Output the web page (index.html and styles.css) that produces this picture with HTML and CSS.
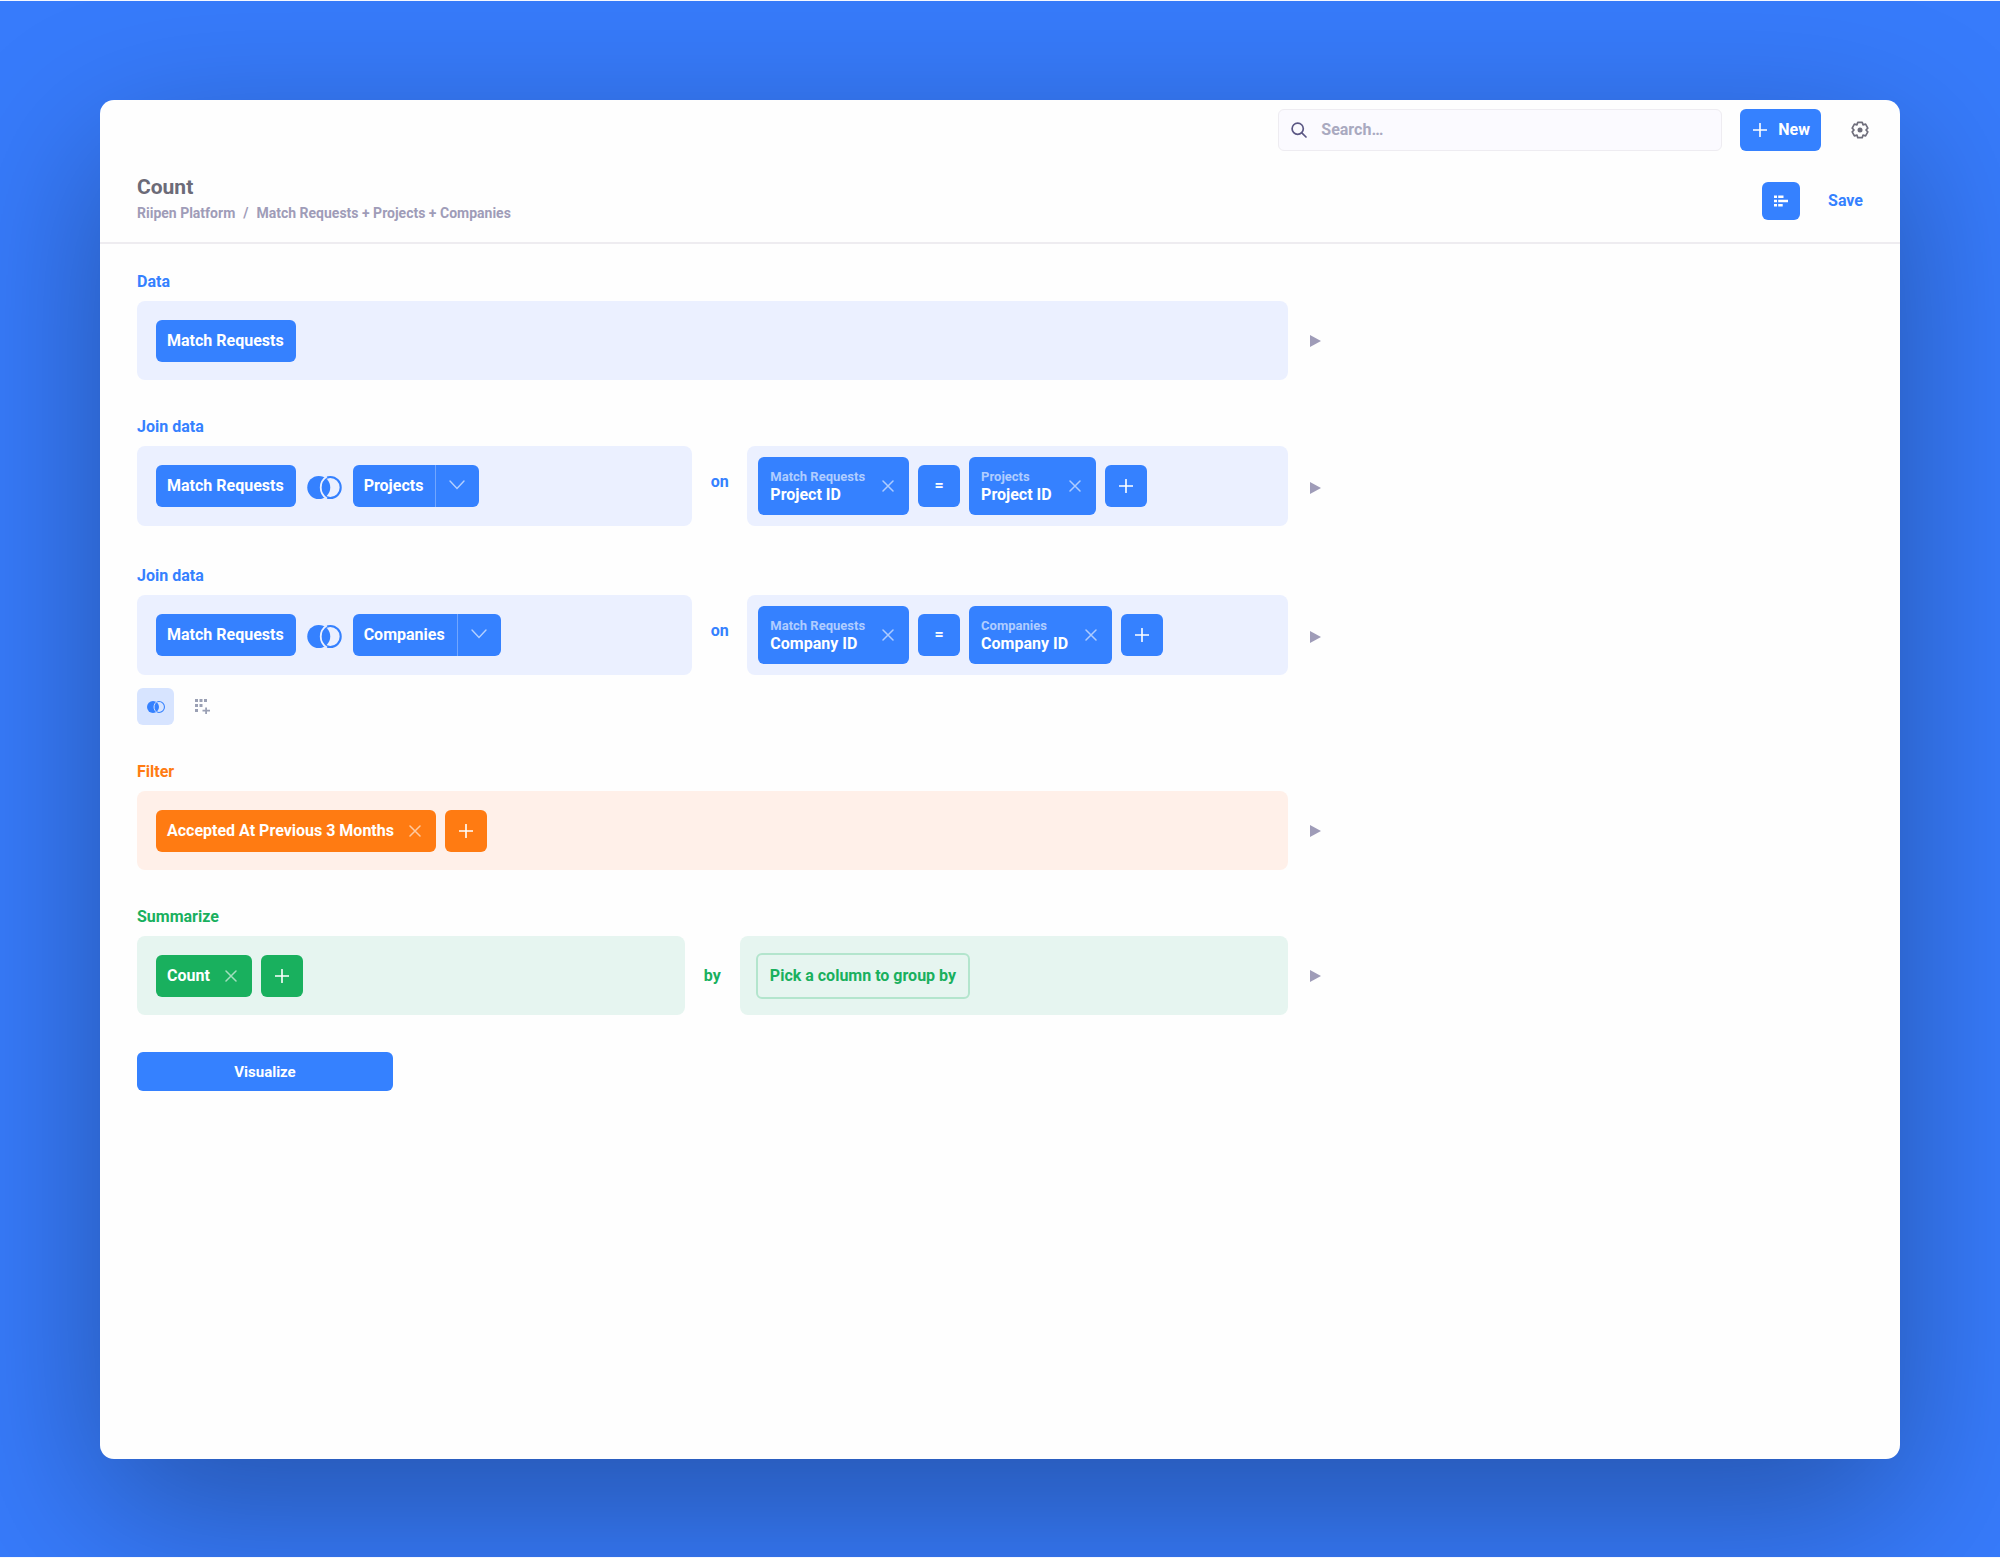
FILE: index.html
```html
<!DOCTYPE html>
<html lang="en">
<head>
    <meta charset="UTF-8">
    <meta name="viewport" content="width=device-width, initial-scale=1.0">
    <title>Count</title>
    <link rel="stylesheet" href="styles.css">
</head>
<body>

<!-- Shared icons -->
<svg class="sprite" aria-hidden="true">
    <symbol id="icon-join" viewBox="0 0 36 24">
        <circle cx="12" cy="12" r="12" fill="currentColor"/>
        <circle cx="24" cy="12" r="10.9" fill="none" stroke="currentColor" stroke-width="2.2"/>
        <path class="join-gap" d="M20.500 .5a13.500 13.500 0 0 0 0 23" fill="none" stroke-width="1.900"/>
    </symbol>
    <symbol id="icon-close" viewBox="0 0 12 12">
        <path d="M1 1l10 10M11 1L1 11" fill="none" stroke="currentColor" stroke-width="1.5" stroke-linecap="round"/>
    </symbol>
    <symbol id="icon-add" viewBox="0 0 14 14">
        <path d="M7 .5v13M.5 7h13" fill="none" stroke="currentColor" stroke-width="1.6" stroke-linecap="round"/>
    </symbol>
    <symbol id="icon-play" viewBox="0 0 11 12">
        <path d="M0 0l11 6-11 6z" fill="currentColor"/>
    </symbol>
    <symbol id="icon-down" viewBox="0 0 16 10">
        <path d="M1 1l7 7.500 7-7.500" fill="none" stroke="currentColor" stroke-width="1.400" stroke-linecap="round"/>
    </symbol>
</svg>

<main class="card">
    <div class="topbar">
        <label class="search">
            <svg class="search-icon" viewBox="0 0 16 16" aria-hidden="true"><circle cx="6.700" cy="6.700" r="5.600" fill="none" stroke="currentColor" stroke-width="1.700"/><path d="M10.800 10.800l4.200 4.200" stroke="currentColor" stroke-width="1.700" stroke-linecap="round"/></svg>
            <input type="search" placeholder="Search…" aria-label="Search">
        </label>
        <button class="btn btn-new"><svg class="icon-add" aria-hidden="true"><use href="#icon-add"/></svg>New</button>
        <button class="btn-icon" aria-label="Settings">
            <svg class="icon-gear" viewBox="0 0 18 18" aria-hidden="true"><path d="M6.800 1.300h4.400L12 3.800l2.600-.6 2.200 3.900L15 9l1.800 1.900-2.200 3.900-2.600-.6-.8 2.500H6.800L6 14.200l-2.600.6-2.200-3.900L3 9 1.200 7.100l2.200-3.900 2.600.6z" fill="none" stroke="currentColor" stroke-width="1.700" stroke-linejoin="round"/><circle cx="9" cy="9" r="2.500" fill="currentColor"/></svg>
        </button>
    </div>

    <header class="header">
        <div class="header-text">
            <h1>Count</h1>
            <nav class="breadcrumb"><a href="#">Riipen Platform</a><span>/</span><a href="#">Match Requests + Projects + Companies</a></nav>
        </div>
        <button class="btn btn-notebook" aria-label="Notebook editor">
            <svg class="icon-notebook" viewBox="0 0 14 12" aria-hidden="true"><path d="M0 .5h3V3H0zM4.200.5h5.300V3H4.200zM0 4.700h3v2.600H0zM4.200 4.700H14v2.600H4.200zM0 9h3v2.500H0zM4.200 9h4.500v2.500H4.200z" fill="currentColor"/></svg>
        </button>
        <a class="save" href="#">Save</a>
    </header>

    <div class="notebook">
        <!-- Data -->
        <section class="step step-blue">
            <h2>Data</h2>
            <div class="step-row">
                <div class="cell"><button class="chip">Match Requests</button></div>
                <button class="play" aria-label="Preview"><svg class="icon-play" aria-hidden="true"><use href="#icon-play"/></svg></button>
            </div>
        </section>

        <!-- Joins -->
        <section class="step step-blue">
            <h2>Join data</h2>
            <div class="step-row step-row-join">
                <div class="cell">
                    <button class="chip">Match Requests</button>
                    <button class="join-type" aria-label="Left outer join"><svg class="icon-join" aria-hidden="true"><use href="#icon-join"/></svg></button>
                    <div class="split">
                        <button class="chip">Projects</button>
                        <button class="chip chip-down" aria-label="Pick columns"><svg class="icon-down" aria-hidden="true"><use href="#icon-down"/></svg></button>
                    </div>
                </div>
                <span class="word word-on">on</span>
                <div class="cell cell-keys">
                    <div class="key"><button class="key-name"><small>Match Requests</small>Project ID</button><button class="close" aria-label="Remove"><svg class="icon-close" aria-hidden="true"><use href="#icon-close"/></svg></button></div>
                    <button class="chip chip-square">=</button>
                    <div class="key"><button class="key-name"><small>Projects</small>Project ID</button><button class="close" aria-label="Remove"><svg class="icon-close" aria-hidden="true"><use href="#icon-close"/></svg></button></div>
                    <button class="chip chip-square" aria-label="Add"><svg class="icon-add" aria-hidden="true"><use href="#icon-add"/></svg></button>
                </div>
                <button class="play" aria-label="Preview"><svg class="icon-play" aria-hidden="true"><use href="#icon-play"/></svg></button>
            </div>
        </section>

        <section class="step step-blue">
            <h2>Join data</h2>
            <div class="step-row step-row-join">
                <div class="cell">
                    <button class="chip">Match Requests</button>
                    <button class="join-type" aria-label="Left outer join"><svg class="icon-join" aria-hidden="true"><use href="#icon-join"/></svg></button>
                    <div class="split">
                        <button class="chip">Companies</button>
                        <button class="chip chip-down" aria-label="Pick columns"><svg class="icon-down" aria-hidden="true"><use href="#icon-down"/></svg></button>
                    </div>
                </div>
                <span class="word word-on">on</span>
                <div class="cell cell-keys">
                    <div class="key"><button class="key-name"><small>Match Requests</small>Company ID</button><button class="close" aria-label="Remove"><svg class="icon-close" aria-hidden="true"><use href="#icon-close"/></svg></button></div>
                    <button class="chip chip-square">=</button>
                    <div class="key"><button class="key-name"><small>Companies</small>Company ID</button><button class="close" aria-label="Remove"><svg class="icon-close" aria-hidden="true"><use href="#icon-close"/></svg></button></div>
                    <button class="chip chip-square" aria-label="Add"><svg class="icon-add" aria-hidden="true"><use href="#icon-add"/></svg></button>
                </div>
                <button class="play" aria-label="Preview"><svg class="icon-play" aria-hidden="true"><use href="#icon-play"/></svg></button>
            </div>
            <div class="actions">
                <button class="action action-active" aria-label="Join data"><svg class="icon-join-small" aria-hidden="true"><use href="#icon-join"/></svg></button>
                <button class="action" aria-label="Custom column"><svg class="icon-column" viewBox="0 0 15 15" aria-hidden="true"><path d="M0 0h3v3H0zM4.500 0h3v3h-3zM9 0h3v3H9zM0 5h3v3H0zM4.500 5h3v3h-3zM0 10h3v3H0zM10.200 8.500h1.800v2.300h3v1.800h-3V15h-1.800v-2.400H7.500v-1.800h2.700z" fill="currentColor"/></svg></button>
            </div>
        </section>

        <!-- Filter -->
        <section class="step step-orange">
            <h2>Filter</h2>
            <div class="step-row">
                <div class="cell">
                    <div class="pill"><button class="pill-name">Accepted At Previous 3 Months</button><button class="close" aria-label="Remove"><svg class="icon-close" aria-hidden="true"><use href="#icon-close"/></svg></button></div>
                    <button class="chip chip-square" aria-label="Add"><svg class="icon-add" aria-hidden="true"><use href="#icon-add"/></svg></button>
                </div>
                <button class="play" aria-label="Preview"><svg class="icon-play" aria-hidden="true"><use href="#icon-play"/></svg></button>
            </div>
        </section>

        <!-- Summarize -->
        <section class="step step-green">
            <h2>Summarize</h2>
            <div class="step-row step-row-summarize">
                <div class="cell">
                    <div class="pill"><button class="pill-name">Count</button><button class="close" aria-label="Remove"><svg class="icon-close" aria-hidden="true"><use href="#icon-close"/></svg></button></div>
                    <button class="chip chip-square" aria-label="Add"><svg class="icon-add" aria-hidden="true"><use href="#icon-add"/></svg></button>
                </div>
                <span class="word">by</span>
                <div class="cell cell-group"><button class="pick">Pick a column to group by</button></div>
                <button class="play" aria-label="Preview"><svg class="icon-play" aria-hidden="true"><use href="#icon-play"/></svg></button>
            </div>
        </section>

        <button class="btn btn-visualize">Visualize</button>
    </div>
</main>

</body>
</html>
```

FILE: styles.css
```css
* {
    box-sizing: border-box;
}
body {
    display: flex;
    min-height: 100vh;
    margin: 0;
    padding: 99px 100px 98px;
    border-top: 1px solid #f4f7ff;
    border-bottom: 1px solid #f4f7ff;
    background-color: #377bfb;
    font-family: Roboto, sans-serif;
    font-size: 16px;
    font-weight: 700;
    line-height: 20px;
}
button {
    margin: 0;
    padding: 0;
    border: none;
    background: none;
    color: inherit;
    font: inherit;
    cursor: pointer;
}
a {
    color: inherit;
    text-decoration: none;
}
svg {
    display: block;
    flex: none;
}
.sprite {
    position: absolute;
    width: 0;
    height: 0;
}
.card {
    flex: 1;
    min-width: 0;
    border-radius: 14px;
    background-color: #fefefe;
    box-shadow: 0 50px 160px rgba(0,0,0,0.32);
}

/* Top bar */
.topbar {
    display: flex;
    align-items: center;
    justify-content: flex-end;
    padding: 9px 31px 9px 37px;
}
.search {
    display: flex;
    align-items: center;
    gap: 14px;
    width: 444px;
    height: 42px;
    margin-right: 18px;
    padding: 0 12px;
    border: 1px solid #eeecf1;
    border-radius: 6px;
    background-color: #fbfaff;
}
.search-icon {
    width: 16px;
    height: 16px;
    color: #5b5784;
}
.search input {
    flex: 1;
    min-width: 0;
    padding: 0;
    border: none;
    outline: none;
    background: none;
    font: inherit;
}
.search input::placeholder {
    color: #a9a9c0;
    opacity: 1;
}
.btn {
    display: flex;
    align-items: center;
    justify-content: center;
    border-radius: 6px;
    background-color: #3581ff;
    color: #fff;
}
.btn-new {
    gap: 11px;
    height: 42px;
    padding: 0 11px 0 13px;
    margin-right: 30px;
}
.btn-icon {
    color: #6f6e7b;
}
.icon-gear {
    width: 18px;
    height: 18px;
}

/* Header */
.header {
    display: flex;
    align-items: center;
    padding: 14px 37px;
    border-bottom: 2px solid #eeecf0;
}
.header-text {
    flex: 1;
    padding-bottom: 6px;
}
h1 {
    margin: 0;
    color: #6c6b78;
    font-size: 21px;
    line-height: 26px;
}
.breadcrumb {
    display: flex;
    gap: 8px;
    margin-top: 4px;
    color: #9f9cb8;
    font-size: 14px;
    line-height: 18px;
}
.btn-notebook {
    width: 38px;
    height: 38px;
    margin-right: 28px;
}
.icon-notebook {
    width: 14px;
    height: 12px;
}
.save {
    color: #3581ff;
}

/* Notebook steps */
.notebook {
    padding: 28px 37px;
}
.step {
    width: 66.667%;
    margin-bottom: 37px;
}
.step-blue {
    --color: #3581ff;
    --tint: #ebf0ff;
}
.step-orange {
    --color: #ff7b12;
    --tint: #fff0e9;
}
.step-green {
    --color: #19b05e;
    --tint: #e6f5f0;
}
h2 {
    margin: 0 0 9px;
    color: var(--color);
    font-size: 16px;
    line-height: 20px;
}
.step-row {
    display: grid;
    position: relative;
}
.step-row-join {
    grid-template-columns: 37fr 55px 36fr;
    padding-bottom: 3px;
}
.step-row-summarize {
    grid-template-columns: 1fr 55px 1fr;
}
.cell {
    display: flex;
    align-items: center;
    gap: 9px;
    min-height: 79px;
    padding: 0 19px;
    border-radius: 8px;
    background-color: var(--tint);
}
.cell-keys {
    padding: 11px;
}
.cell-group {
    padding: 0 16px;
}
.word {
    align-self: center;
    color: var(--color);
    text-align: center;
}
.word-on {
    padding-bottom: 9px;
}
.chip {
    display: flex;
    align-items: center;
    justify-content: center;
    height: 42px;
    padding: 0 12px 0 11px;
    border-radius: 6px;
    background-color: var(--color);
    color: #fff;
}
.chip-square {
    width: 42px;
    padding: 0;
}
.join-type {
    padding: 2px 2px 0;
    color: var(--color);
}
.join-gap {
    stroke: var(--tint);
}
.icon-join {
    width: 35px;
    height: 23px;
}
.split {
    display: flex;
}
.split .chip:first-child {
    border-radius: 6px 0 0 6px;
}
.split .chip-down {
    width: 44px;
    padding-bottom: 3px;
    border-left: 1px solid #71a6ff;
    border-radius: 0 6px 6px 0;
}
.icon-down {
    width: 16px;
    height: 10px;
    color: #b4d0ff;
}
.key,
.pill {
    display: flex;
    align-items: center;
    border-radius: 6px;
    background-color: var(--color);
    color: #fff;
}
.key {
    gap: 17px;
    height: 58px;
    padding: 0 15px 0 12px;
}
.pill {
    gap: 15px;
    height: 42px;
    padding: 0 15px 0 11px;
}
.key-name {
    padding-top: 1px;
    text-align: left;
}
.key-name small {
    display: block;
    color: #b0cdff;
    font-size: 13px;
    line-height: 16px;
}
.close {
    opacity: 0.6;
}
.icon-close {
    width: 12px;
    height: 12px;
}
.icon-add {
    width: 14px;
    height: 14px;
}
.pick {
    height: 46px;
    padding: 0 12px;
    border: 2px solid #b3e5cd;
    border-radius: 6px;
    color: var(--color);
}
/* Preview arrow sits outside the step, to its right */
.play {
    position: absolute;
    top: 50%;
    right: -33px;
    transform: translateY(-50%);
    color: #9f9cb8;
}
.icon-play {
    width: 11px;
    height: 12px;
}
.actions {
    display: flex;
    gap: 10px;
    margin-top: 10px;
}
.action {
    display: flex;
    align-items: center;
    justify-content: center;
    width: 37px;
    height: 37px;
    border-radius: 6px;
    color: #9aa0b4;
}
.action-active {
    --tint: #d7e4ff;
    background-color: var(--tint);
    color: var(--color);
}
.icon-join-small {
    width: 18px;
    height: 12px;
}
.icon-column {
    width: 15px;
    height: 15px;
}
.btn-visualize {
    width: 256px;
    height: 39px;
    font-size: 15px;
}
```
